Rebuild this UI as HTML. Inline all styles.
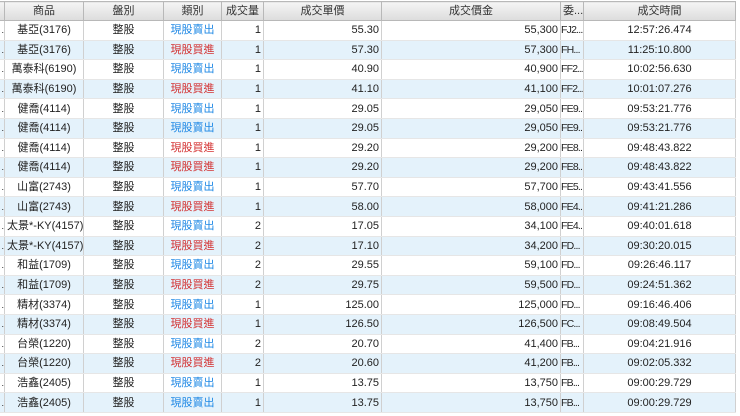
<!DOCTYPE html>
<html><head><meta charset="utf-8"><style>
body{margin:0;width:740px;height:416px;overflow:hidden;background:#fff;font-family:"Liberation Sans","Noto Sans CJK TC",sans-serif;font-size:11px;color:#222}
table{position:absolute;left:-2px;top:1px;border-collapse:collapse;table-layout:fixed;width:737px;background:#fff}
td,th{height:18.6px;border:1px solid #d0d0d0;border-top:none;border-bottom:1px solid #e6e6e6;padding:0 2px;white-space:nowrap;overflow:hidden;line-height:18px}
th{font-weight:normal;background:linear-gradient(#f4f4f4,#dcdcdc);border:1px solid #b8b8b8;height:18px;color:#333}
tr:nth-child(odd) td{background:#e4f2fb}
.c{text-align:center}.r{text-align:right}
.b{color:#1e88e5;text-align:center}.s{color:#d32f2f;text-align:center}
.d{padding:0;font-size:9px;text-align:right}
.e{padding:0;letter-spacing:-0.8px;font-size:10.5px}
</style></head><body>
<table>
<colgroup><col style="width:6px"><col style="width:79px"><col style="width:80px"><col style="width:58px"><col style="width:42px"><col style="width:118px"><col style="width:179px"><col style="width:23px"><col style="width:152px"></colgroup>
<tr><th></th><th>商品</th><th>盤別</th><th>類別</th><th>成交量</th><th>成交單價</th><th>成交價金</th><th>委...</th><th>成交時間</th></tr>
<tr><td class="d">.</td><td class="c">基亞(3176)</td><td class="c">整股</td><td class="b">現股賣出</td><td class="r">1</td><td class="r">55.30</td><td class="r">55,300</td><td class="e">FJ2...</td><td class="c">12:57:26.474</td></tr>
<tr><td class="d">.</td><td class="c">基亞(3176)</td><td class="c">整股</td><td class="s">現股買進</td><td class="r">1</td><td class="r">57.30</td><td class="r">57,300</td><td class="e">FH...</td><td class="c">11:25:10.800</td></tr>
<tr><td class="d">.</td><td class="c">萬泰科(6190)</td><td class="c">整股</td><td class="b">現股賣出</td><td class="r">1</td><td class="r">40.90</td><td class="r">40,900</td><td class="e">FF2...</td><td class="c">10:02:56.630</td></tr>
<tr><td class="d">.</td><td class="c">萬泰科(6190)</td><td class="c">整股</td><td class="s">現股買進</td><td class="r">1</td><td class="r">41.10</td><td class="r">41,100</td><td class="e">FF2...</td><td class="c">10:01:07.276</td></tr>
<tr><td class="d">.</td><td class="c">健喬(4114)</td><td class="c">整股</td><td class="b">現股賣出</td><td class="r">1</td><td class="r">29.05</td><td class="r">29,050</td><td class="e">FE9...</td><td class="c">09:53:21.776</td></tr>
<tr><td class="d">.</td><td class="c">健喬(4114)</td><td class="c">整股</td><td class="b">現股賣出</td><td class="r">1</td><td class="r">29.05</td><td class="r">29,050</td><td class="e">FE9...</td><td class="c">09:53:21.776</td></tr>
<tr><td class="d">.</td><td class="c">健喬(4114)</td><td class="c">整股</td><td class="s">現股買進</td><td class="r">1</td><td class="r">29.20</td><td class="r">29,200</td><td class="e">FE8...</td><td class="c">09:48:43.822</td></tr>
<tr><td class="d">.</td><td class="c">健喬(4114)</td><td class="c">整股</td><td class="s">現股買進</td><td class="r">1</td><td class="r">29.20</td><td class="r">29,200</td><td class="e">FE8...</td><td class="c">09:48:43.822</td></tr>
<tr><td class="d">.</td><td class="c">山富(2743)</td><td class="c">整股</td><td class="b">現股賣出</td><td class="r">1</td><td class="r">57.70</td><td class="r">57,700</td><td class="e">FE5...</td><td class="c">09:43:41.556</td></tr>
<tr><td class="d">.</td><td class="c">山富(2743)</td><td class="c">整股</td><td class="s">現股買進</td><td class="r">1</td><td class="r">58.00</td><td class="r">58,000</td><td class="e">FE4...</td><td class="c">09:41:21.286</td></tr>
<tr><td class="d">.</td><td class="c">太景*-KY(4157)</td><td class="c">整股</td><td class="b">現股賣出</td><td class="r">2</td><td class="r">17.05</td><td class="r">34,100</td><td class="e">FE4...</td><td class="c">09:40:01.618</td></tr>
<tr><td class="d">.</td><td class="c">太景*-KY(4157)</td><td class="c">整股</td><td class="s">現股買進</td><td class="r">2</td><td class="r">17.10</td><td class="r">34,200</td><td class="e">FD...</td><td class="c">09:30:20.015</td></tr>
<tr><td class="d">.</td><td class="c">和益(1709)</td><td class="c">整股</td><td class="b">現股賣出</td><td class="r">2</td><td class="r">29.55</td><td class="r">59,100</td><td class="e">FD...</td><td class="c">09:26:46.117</td></tr>
<tr><td class="d">.</td><td class="c">和益(1709)</td><td class="c">整股</td><td class="s">現股買進</td><td class="r">2</td><td class="r">29.75</td><td class="r">59,500</td><td class="e">FD...</td><td class="c">09:24:51.362</td></tr>
<tr><td class="d">.</td><td class="c">精材(3374)</td><td class="c">整股</td><td class="b">現股賣出</td><td class="r">1</td><td class="r">125.00</td><td class="r">125,000</td><td class="e">FD...</td><td class="c">09:16:46.406</td></tr>
<tr><td class="d">.</td><td class="c">精材(3374)</td><td class="c">整股</td><td class="s">現股買進</td><td class="r">1</td><td class="r">126.50</td><td class="r">126,500</td><td class="e">FC...</td><td class="c">09:08:49.504</td></tr>
<tr><td class="d">.</td><td class="c">台榮(1220)</td><td class="c">整股</td><td class="b">現股賣出</td><td class="r">2</td><td class="r">20.70</td><td class="r">41,400</td><td class="e">FB...</td><td class="c">09:04:21.916</td></tr>
<tr><td class="d">.</td><td class="c">台榮(1220)</td><td class="c">整股</td><td class="s">現股買進</td><td class="r">2</td><td class="r">20.60</td><td class="r">41,200</td><td class="e">FB...</td><td class="c">09:02:05.332</td></tr>
<tr><td class="d">.</td><td class="c">浩鑫(2405)</td><td class="c">整股</td><td class="b">現股賣出</td><td class="r">1</td><td class="r">13.75</td><td class="r">13,750</td><td class="e">FB...</td><td class="c">09:00:29.729</td></tr>
<tr><td class="d">.</td><td class="c">浩鑫(2405)</td><td class="c">整股</td><td class="b">現股賣出</td><td class="r">1</td><td class="r">13.75</td><td class="r">13,750</td><td class="e">FB...</td><td class="c">09:00:29.729</td></tr>
</table>
</body></html>
